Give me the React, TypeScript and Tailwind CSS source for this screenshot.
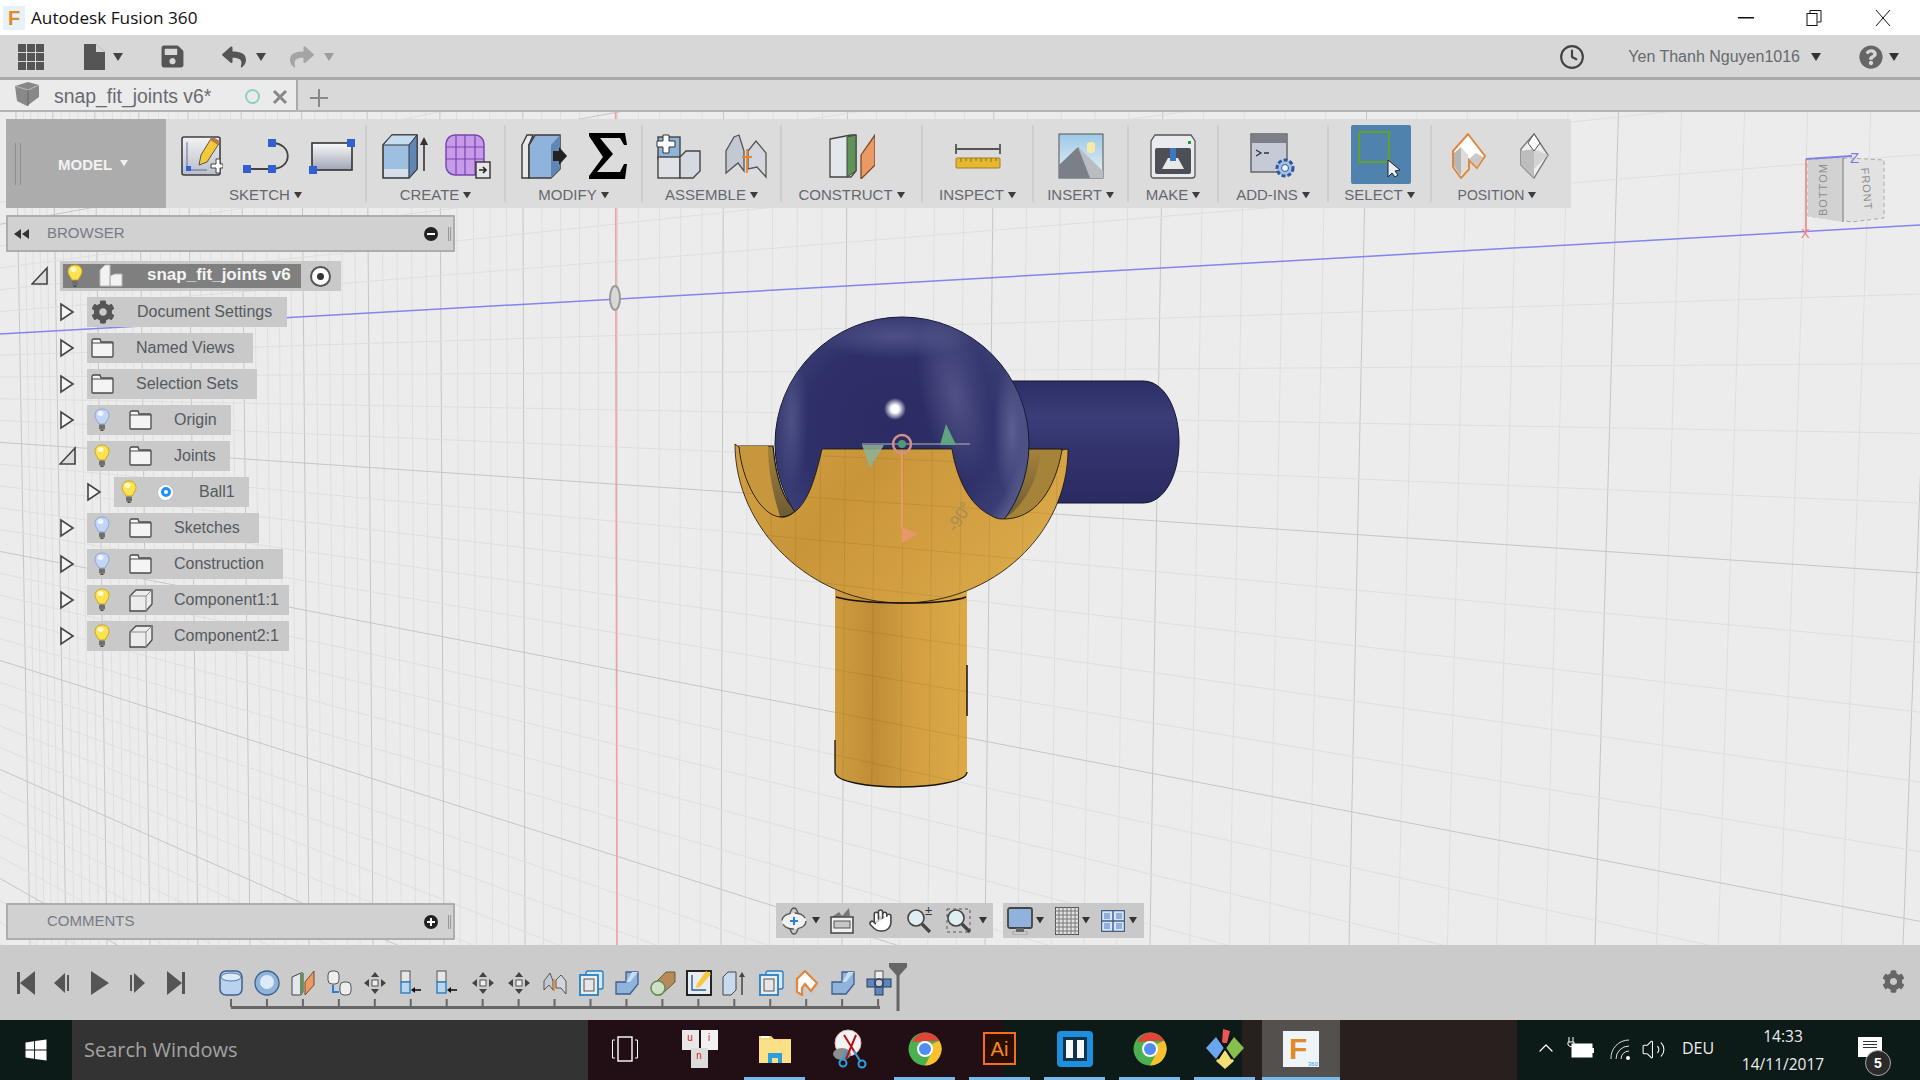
import React from "react";
import { FaCog, FaSave, FaReply, FaShare, FaQuestionCircle, FaWindows } from "react-icons/fa";
import { Clock, Hand, Volume2, ChevronUp } from "lucide-react";

const sans = "font-['Liberation_Sans',Arial,sans-serif]";

const Caret = ({ c = "#3d3d3d", s = 8 }: { c?: string; s?: number }) => (
  <svg width={s} height={s * 0.8} viewBox="0 0 10 8" className="shrink-0"><polygon points="0,0 10,0 5,8" fill={c} /></svg>
);

/* ---------- viewport grid ---------- */
const vMajors = [30, 66, 107, 150, 198, 250, 309, 373, 444, 525, 617, 721, 842, 985, 1150, 1349, 1595, 1903];
const vLines: { b: number; major: boolean }[] = [];
vMajors.forEach((b, i) => {
  vLines.push({ b, major: true });
  const n = vMajors[i + 1];
  if (n) for (let k = 1; k < 5; k++) vLines.push({ b: b + ((n - b) * k) / 5, major: false });
});
const hLines: { k: number; major: boolean }[] = [];
for (let k = -6; k <= 70; k++) hLines.push({ k, major: k % 5 === 0 });
const hy = (k: number, x: number) => 383 + ((268 + 50.5 * k - 383) * (x + 874)) / 2024;

const Grid = ({ minor, major, skipAxis = true }: { minor: string; major: string; skipAxis?: boolean }) => (
  <g strokeWidth={1}>
    {vLines.map((l, i) => (
      <line key={"v" + i} x1={l.b + (l.b - 617) * 0.024} y1={112} x2={l.b} y2={945} stroke={l.major ? major : minor} />
    ))}
    {hLines.filter((l) => !(skipAxis && l.k === 0)).map((l, i) => (
      <line key={"h" + i} x1={0} y1={hy(l.k, 0)} x2={1920} y2={hy(l.k, 1920)} stroke={l.major ? major : minor} />
    ))}
  </g>
);

const frontFace =
  "M822,449 H952 C957,480 970,505 990,515 C995,518 998,519 1002,519 C1035,520 1055,490 1062,450 L1068,449 C1068,534 993,603 902,603 C811,603 735,529 735,444 L739,447 C742,480 760,515 780,517 C785,518 790,516 797,510 C808,500 815,480 822,449 Z";

const Scene = () => (
  <svg className="absolute inset-0 w-full h-full" viewBox="0 112 1920 833" preserveAspectRatio="none">
    <defs>
      <linearGradient id="cylH" x1="0" y1="0" x2="0" y2="1">
        <stop offset="0" stopColor="#2d2e66" /><stop offset="0.3" stopColor="#3b3d78" /><stop offset="0.55" stopColor="#33346e" /><stop offset="1" stopColor="#2b2b62" />
      </linearGradient>
      <radialGradient id="ball" cx="0.47" cy="0.45" r="0.55">
        <stop offset="0" stopColor="#2b2c63" /><stop offset="0.65" stopColor="#2f306a" /><stop offset="0.9" stopColor="#3a3d74" /><stop offset="1" stopColor="#555a8a" />
      </radialGradient>
      <radialGradient id="glow">
        <stop offset="0" stopColor="#9498c2" stopOpacity="0.55" /><stop offset="1" stopColor="#9498c2" stopOpacity="0" />
      </radialGradient>
      <radialGradient id="spark">
        <stop offset="0" stopColor="#ffffff" /><stop offset="0.35" stopColor="#ffffff" /><stop offset="1" stopColor="#ffffff" stopOpacity="0" />
      </radialGradient>
      <linearGradient id="bowl" x1="0" y1="0" x2="1" y2="0.4">
        <stop offset="0" stopColor="#d2a044" /><stop offset="0.4" stopColor="#c9953a" /><stop offset="1" stopColor="#d9a848" />
      </linearGradient>
      <linearGradient id="stem" x1="0" y1="0" x2="1" y2="0">
        <stop offset="0" stopColor="#cf9d40" /><stop offset="0.3" stopColor="#c08d38" /><stop offset="0.6" stopColor="#d3a042" /><stop offset="1" stopColor="#dba946" />
      </linearGradient>
      <linearGradient id="wall" x1="0" y1="0" x2="0" y2="1">
        <stop offset="0" stopColor="#a5823c" /><stop offset="1" stopColor="#6d5a34" />
      </linearGradient>
      <clipPath id="ballClip"><circle cx="902" cy="444" r="127" /></clipPath>
      <clipPath id="orangeClip">
        <path d={frontFace} />
        <path d="M835,590 H967 V772 C967,782 930,787 900,787 C870,787 835,782 835,772 Z" />
      </clipPath>
    </defs>
    <rect x="0" y="112" width="1920" height="833" fill="#ececec" />
    <Grid minor="#dfdfdf" major="#c6c6c6" />
    {/* axes */}
    <line x1="0" y1="334" x2="1920" y2="225" stroke="#8484ee" strokeWidth="1.5" />
    <line x1="615.5" y1="112" x2="617" y2="945" stroke="#f4a0a0" strokeWidth="1.5" />
    <ellipse cx="615" cy="298" rx="5" ry="12" fill="#d8d8d8" stroke="#9a9a9a" strokeWidth="2" />
    {/* view cube */}
    <g>
      <path d="M1808,160 L1850,158 L1884,160 V218 L1852,222 L1808,216 Z" fill="#e2e2e2" stroke="#a9a9a9" strokeDasharray="4 3" />
      <path d="M1808,160 L1843,158 V222 L1808,216 Z" fill="#d2d2d2" />
      <line x1="1843" y1="158" x2="1843" y2="222" stroke="#777" />
      <line x1="1806" y1="159" x2="1806" y2="232" stroke="#f07c7c" strokeWidth="1.5" />
      <line x1="1806" y1="159" x2="1852" y2="156" stroke="#8080e6" strokeWidth="2" />
      <text x="1850" y="163" fontSize="15" fill="#7878e6" fontFamily="Liberation Sans">Z</text>
      <text x="1801" y="238" fontSize="13" fill="#f07c7c" fontFamily="Liberation Sans">X</text>
      <text transform="translate(1827,216) rotate(-90)" fontSize="11" fill="#8e8e8e" fontFamily="Liberation Sans" letterSpacing="1">BOTTOM</text>
      <text transform="translate(1861,168) rotate(85)" fontSize="11" fill="#8e8e8e" fontFamily="Liberation Sans" letterSpacing="1">FRONT</text>
    </g>
    {/* horizontal cylinder */}
    <path d="M1000,381 H1143 C1165,381 1179,410 1179,442 C1179,474 1165,503 1143,503 H1030 Z" fill="url(#cylH)" stroke="#15152e" strokeWidth="1" />
    {/* bowl back walls */}
    <path d="M739,446 H773 C776,480 785,505 797,510 C790,516 785,518 780,517 C760,515 742,480 739,446 Z" fill="url(#wall)" stroke="#1a1408" strokeWidth="1.2" />
    <path d="M1025,449 H1062 C1055,490 1035,520 1002,519 L990,515 C1010,505 1025,480 1025,449 Z" fill="url(#wall)" stroke="#1a1408" strokeWidth="1.2" />
    <path d="M739,446 H768 C768,480 778,508 780,517 C760,515 742,480 739,446 Z" fill="#c7973e" />
    <path d="M1062,450 H1040 C1040,480 1020,512 1002,519 C1035,520 1055,490 1062,450 Z" fill="#a58339" />
    {/* sphere */}
    <circle cx="902" cy="444" r="127" fill="url(#ball)" stroke="#15152e" strokeWidth="1" />
    <g clipPath="url(#ballClip)">
      <ellipse cx="955" cy="395" rx="34" ry="90" fill="url(#glow)" opacity="0.6" transform="rotate(-12 955 395)" />
      <ellipse cx="895" cy="337" rx="80" ry="22" fill="url(#glow)" opacity="0.55" />
      <ellipse cx="1012" cy="430" rx="18" ry="70" fill="url(#glow)" opacity="0.7" />
      <ellipse cx="792" cy="420" rx="16" ry="70" fill="url(#glow)" opacity="0.5" />
    </g>
    <circle cx="895" cy="409" r="11" fill="url(#spark)" />
    {/* stem */}
    <path d="M835,590 H967 V772 C967,782 930,787 900,787 C870,787 835,782 835,772 Z" fill="url(#stem)" />
    <path d="M835,740 V772 C835,782 870,787 900,787 C930,787 967,782 967,772" fill="none" stroke="#17120a" strokeWidth="1.3" />
    <line x1="967" y1="665" x2="967" y2="716" stroke="#17120a" strokeWidth="1.5" />
    {/* front of bowl */}
    <path d={frontFace} fill="url(#bowl)" stroke="#17120a" strokeWidth="0.8" />
    <path d="M836,597 C860,604 940,606 966,597" fill="none" stroke="#17120a" strokeWidth="1.4" />
    <g clipPath="url(#orangeClip)" opacity="0.07"><Grid minor="#000" major="#000" skipAxis={false} /></g>
    {/* triad */}
    <line x1="862" y1="444" x2="970" y2="444" stroke="#b5b5b5" strokeWidth="1.2" />
    <polygon points="862,445 884,445 870,468" fill="#8db49a" opacity="0.85" />
    <polygon points="940,445 956,445 946,424" fill="#5fa57f" />
    <line x1="902" y1="450" x2="902" y2="530" stroke="#ee9b72" strokeWidth="1.6" />
    <polygon points="902,527 902,543 918,534" fill="#e9966d" />
    <circle cx="902" cy="444" r="9" fill="none" stroke="#d58f8a" strokeWidth="2.5" />
    <circle cx="902" cy="444" r="4" fill="#4e9a78" />
    <text transform="translate(956,533) rotate(-58)" fontSize="17" fill="#a88c52" fontFamily="Liberation Sans">-90°</text>
  </svg>
);

/* ---------- tree icons ---------- */
const Bulb = ({ blue }: { blue?: boolean }) => (
  <svg width="16" height="24" viewBox="0 0 16 24" className="shrink-0">
    <path d="M8,1 C3.5,1 1,4 1,7.5 C1,11 4,13 4.8,16 H11.2 C12,13 15,11 15,7.5 C15,4 12.5,1 8,1 Z" fill={blue ? "#c3d5f7" : "#fae34e"} stroke={blue ? "#8da6d8" : "#cda520"} />
    <ellipse cx="6.5" cy="5.5" rx="3" ry="2.5" fill="#ffffff" opacity="0.75" />
    <rect x="5" y="16.5" width="6" height="5" rx="1" fill="#6f6f6f" />
    <rect x="6.5" y="21.5" width="3" height="1.5" fill="#4a4a4a" />
  </svg>
);
const Folder = () => (
  <svg width="23" height="20" viewBox="0 0 23 20" className="shrink-0">
    <path d="M1,3 C1,1.8 1.6,1 2.5,1 H9 L10,4 H21 C21.6,4 22,4.4 22,5 V18 C22,18.6 21.6,19 21,19 H2 C1.4,19 1,18.6 1,18 Z" fill="#f4f4f4" stroke="#4a4a4a" strokeWidth="1.3" />
    <line x1="1" y1="5" x2="22" y2="5" stroke="#4a4a4a" strokeWidth="1" />
  </svg>
);
const CompCube = () => (
  <svg width="24" height="24" viewBox="0 0 24 24" className="shrink-0">
    <path d="M1,8 L7,2 H23 V16 L17,23 H1 Z" fill="#ececec" stroke="#4a4a4a" strokeWidth="1.3" />
    <path d="M1,8 H17 V23 M17,8 L23,2" fill="none" stroke="#8a8a8a" strokeWidth="1" />
  </svg>
);
const Tri = ({ open }: { open?: boolean }) => (
  <svg width="17" height="20" viewBox="0 0 17 20" className="shrink-0">
    {open ? (
      <polygon points="1,18 16,18 16,2" fill="#dcdcdc" stroke="#444" strokeWidth="1.6" />
    ) : (
      <polygon points="2,2 2,18 14,10" fill="#f4f4f4" stroke="#444" strokeWidth="1.6" />
    )}
  </svg>
);

type RowT = { label: string; bulb?: "y" | "b"; kind: "gear" | "folder" | "cube" | "radio"; open?: boolean; depth?: number; pr: string };
const rows: RowT[] = [
  { label: "Document Settings", kind: "gear", pr: "pr-[15px]" },
  { label: "Named Views", kind: "folder", pr: "pr-[19px]" },
  { label: "Selection Sets", kind: "folder", pr: "pr-[19px]" },
  { label: "Origin", kind: "folder", bulb: "b", pr: "pr-[14px]" },
  { label: "Joints", kind: "folder", bulb: "y", open: true, pr: "pr-[14px]" },
  { label: "Ball1", kind: "radio", bulb: "y", depth: 1, pr: "pr-[14px]" },
  { label: "Sketches", kind: "folder", bulb: "b", pr: "pr-[19px]" },
  { label: "Construction", kind: "folder", bulb: "b", pr: "pr-[19px]" },
  { label: "Component1:1", kind: "cube", bulb: "y", pr: "pr-[10px]" },
  { label: "Component2:1", kind: "cube", bulb: "y", pr: "pr-[10px]" },
];

const Row = ({ r }: { r: RowT }) => (
  <div className={r.depth ? "flex items-center h-[30px] pl-[86px]" : "flex items-center h-[30px] pl-[59px]"}>
    <Tri open={r.open} />
    <div className={`ml-[11px] h-[30px] flex items-center bg-[#c9c9c9] ${r.pr}`}>
      {r.bulb ? (
        <div className="pl-[7px] pr-[19px]"><Bulb blue={r.bulb === "b"} /></div>
      ) : null}
      {r.kind === "gear" && <div className="pl-[4px] pr-[22px] text-[#555]"><FaCog size={24} /></div>}
      {r.kind === "folder" && (
        <div className={r.bulb ? "pr-[22px]" : "pl-[4px] pr-[22px]"}><Folder /></div>
      )}
      {r.kind === "cube" && <div className="pr-[21px]"><CompCube /></div>}
      {r.kind === "radio" && (
        <div className="pr-[25px] pl-[1px]">
          <div className="w-[17px] h-[17px] rounded-full bg-white border border-[#bbb] flex items-center justify-center">
            <div className="w-[10px] h-[10px] rounded-full border-[3px] border-[#1e90ff] bg-white" />
          </div>
        </div>
      )}
      <span className={`${sans} text-[16px] leading-none text-[#555a5f] whitespace-nowrap`}>{r.label}</span>
    </div>
  </div>
);

const Panel = ({ title, plus, back }: { title: string; plus?: boolean; back?: boolean }) => (
  <div className="w-[449px] h-[37px] ml-[6px] bg-[#d1d1d1] border-2 border-[#adadad] rounded-[1px] flex items-center">
    {back ? (
      <svg width="16" height="10" viewBox="0 0 16 10" className="ml-[6px] mr-[17px]">
        <polygon points="0,5 7,0 7,10" fill="#333" /><polygon points="8,5 15,0 15,10" fill="#333" />
      </svg>
    ) : (
      <div className="w-[39px]" />
    )}
    <span className={`${sans} text-[15px] text-[#777b85]`}>{title}</span>
    <div className="ml-auto w-[14px] h-[14px] rounded-full bg-[#222] flex items-center justify-center relative">
      <div className="w-[8px] h-[2px] bg-white" />
      {plus && <div className="absolute w-[2px] h-[8px] bg-white" />}
    </div>
    <div className="ml-[10px] mr-[2px] w-[3px] h-[14px] border-x border-[#999]" />
  </div>
);

/* ---------- toolbar icons ---------- */
const I = ({ w, h, children }: { w: number; h: number; children: React.ReactNode }) => (
  <svg width={w} height={h} viewBox={`0 0 ${w} ${h}`} className="shrink-0">{children}</svg>
);
const Blue = "#2f62d0";
const IcSketch = () => (
  <I w={42} h={44}>
    <defs><linearGradient id="sk" x1="0" y1="0" x2="0" y2="1"><stop offset="0" stopColor="#f3f3f3" /><stop offset="1" stopColor="#b9bdcb" /></linearGradient></defs>
    <rect x="1" y="3" width="38" height="38" rx="2" fill="url(#sk)" stroke="#3f3f3f" strokeWidth="1.6" />
    <path d="M6,8 V36 H26" fill="none" stroke="#5a6d9a" strokeWidth="1" />
    <rect x="5" y="32" width="5" height="5" fill={Blue} />
    <polygon points="31,3 39,8 26,28 18,31 20,21" fill="#f5c93a" stroke="#555" />
    <polygon points="31,3 39,8 37,11 29,6" fill="#b97a4a" />
    <path d="M30,30 h5 v-5 h4 v5 h3 v4 h-3 v5 h-4 v-5 h-5 z" fill="#fff" stroke="#444" />
  </I>
);
const IcLine = () => (
  <I w={46} h={36}>
    <path d="M4,31 H29 M29,5 C50,5 50,31 29,31" fill="none" stroke="#444" strokeWidth="1.8" />
    <rect x="0" y="27" width="8" height="8" fill={Blue} /><rect x="25" y="27" width="8" height="8" fill={Blue} /><rect x="25" y="1" width="8" height="8" fill={Blue} />
  </I>
);
const IcRect = () => (
  <I w={46} h={36}>
    <defs><linearGradient id="rc" x1="0" y1="0" x2="0" y2="1"><stop offset="0" stopColor="#fafafa" /><stop offset="1" stopColor="#9fa5b8" /></linearGradient></defs>
    <rect x="3" y="5" width="40" height="27" fill="url(#rc)" stroke="#333" strokeWidth="1.6" />
    <rect x="0" y="28" width="8" height="8" fill={Blue} /><rect x="38" y="1" width="8" height="8" fill={Blue} />
  </I>
);
const IcBox = () => (
  <I w={46} h={46}>
    <polygon points="1,12 10,2 35,2 35,36 27,45 1,45" fill="#9dbfe0" stroke="#3b3b3b" strokeWidth="1.6" />
    <polygon points="1,12 10,2 35,2 27,12" fill="#c6dcf0" stroke="#3b3b3b" strokeWidth="1" />
    <polygon points="27,12 35,2 35,36 27,45" fill="#5f86b5" stroke="#3b3b3b" strokeWidth="1" />
    <rect x="2" y="36" width="24" height="8" fill="#d5dee8" />
    <line x1="42" y1="9" x2="42" y2="38" stroke="#333" strokeWidth="1.6" /><polygon points="38,12 46,12 42,4" fill="#333" />
  </I>
);
const IcPurple = () => (
  <I w={46} h={46}>
    <rect x="1" y="2" width="38" height="40" rx="9" fill="#c79bea" stroke="#7a46ad" strokeWidth="1.5" />
    <path d="M1,14 H39 M1,26 H39 M11,2 V42 M20,2 V42 M30,2 V42" stroke="#7a46ad" strokeWidth="1.2" fill="none" />
    <rect x="31" y="29" width="14" height="16" fill="#e6e6e6" stroke="#333" strokeWidth="1.4" />
    <path d="M34,37 H40 M38,34 L41,37 L38,40" stroke="#222" strokeWidth="1.6" fill="none" />
  </I>
);
const IcModify = () => (
  <I w={46} h={46}>
    <polygon points="1,12 6,2 12,2 8,12 8,45 1,45" fill="#e8e8e8" stroke="#3b3b3b" strokeWidth="1.4" />
    <polygon points="8,12 14,2 39,2 39,36 30,45 8,45" fill="#8fb3da" stroke="#3b3b3b" strokeWidth="1.5" />
    <polygon points="30,12 39,2 39,36 30,45" fill="#5f86b5" />
    <rect x="32" y="18" width="6" height="10" fill="#222" /><polygon points="38,14 46,23 38,32" fill="#222" />
  </I>
);
const IcSigma = () => (
  <I w={38} h={46}>
    <polygon points="0,0 36,0 38,12 35,12 31,5 11,5 24,21 8,39 31,39 35,31 38,31 36,46 0,46 0,43 14,24 0,3" fill="#000" />
  </I>
);
const IcAssemble = () => (
  <I w={46} h={46}>
    <rect x="2" y="4" width="22" height="22" fill="#8fb3da" stroke="#444" strokeWidth="1.4" />
    <rect x="2" y="24" width="22" height="21" fill="#dfe3e8" stroke="#444" strokeWidth="1.4" />
    <polygon points="24,24 30,18 44,18 44,38 37,45 24,45" fill="#d5dae0" stroke="#444" strokeWidth="1.4" />
    <path d="M7,2 h6 v6 h6 v6 h-6 v6 h-6 v-6 h-6 v-6 h6 z" fill="#fff" stroke="#333" />
  </I>
);
const IcJoint = () => (
  <I w={44} h={46}>
    <path d="M2,40 V18 L10,4 L15,2 L20,18 V38 L14,30 Z" fill="#c3c9d2" stroke="#555" strokeWidth="1.3" />
    <path d="M24,36 V18 L32,8 L42,20 V44 L33,34 Z" fill="#d3d7dd" stroke="#555" strokeWidth="1.3" />
    <path d="M23,16 V40 M18,24 H28" stroke="#e8852c" strokeWidth="1.8" fill="none" />
  </I>
);
const IcConstruct = () => (
  <I w={46} h={46}>
    <polygon points="1,6 22,2 27,2 27,38 22,44 1,44" fill="#e3e6ea" stroke="#444" strokeWidth="1.3" />
    <polygon points="18,4 27,2 27,38 18,44" fill="#5f9456" stroke="#444" />
    <polygon points="32,22 46,2 46,32 32,46" fill="#ec9a63" stroke="#7a4a2a" strokeWidth="1.3" />
  </I>
);
const IcInspect = () => (
  <I w={46} h={26}>
    <path d="M1,1 V11 M45,1 V11 M1,6 H45" stroke="#555" strokeWidth="1.8" fill="none" />
    <rect x="1" y="15" width="44" height="10" rx="1" fill="#e6b732" stroke="#a0801c" />
    <path d="M6,15v4M11,15v3M16,15v4M21,15v3M26,15v4M31,15v3M36,15v4M41,15v3" stroke="#8a6e18" strokeWidth="1" />
  </I>
);
const IcInsert = () => (
  <I w={46} h={46}>
    <defs><linearGradient id="sky" x1="0" y1="0" x2="0" y2="1"><stop offset="0" stopColor="#9dc9e6" /><stop offset="1" stopColor="#eaf2f6" /></linearGradient></defs>
    <rect x="1" y="1" width="44" height="44" fill="url(#sky)" stroke="#555" />
    <polygon points="1,45 1,32 20,14 45,45" fill="#7b7f88" />
    <polygon points="20,14 45,38 45,45 32,45" fill="#b9bcc2" />
    <rect x="29" y="9" width="8" height="11" rx="3" fill="#f7e9a8" />
  </I>
);
const IcMake = () => (
  <I w={46} h={46}>
    <path d="M5,2 H41 L45,8 V42 C45,44 44,45 42,45 H4 C2,45 1,44 1,42 V8 Z" fill="#e9ebee" stroke="#555" strokeWidth="1.3" />
    <rect x="5" y="15" width="36" height="26" rx="2" fill="#4c4f55" />
    <polygon points="12,36 18,25 28,25 34,36" fill="#e8e8e8" />
    <rect x="20" y="15" width="6" height="13" fill="#3a78c2" />
    <rect x="38" y="8" width="3" height="3" fill="#21a034" />
  </I>
);
const IcAddins = () => (
  <I w={46} h={46}>
    <rect x="1" y="1" width="36" height="38" fill="#c6cad6" stroke="#555" strokeWidth="1.3" />
    <rect x="2" y="2" width="34" height="8" fill="#7c7f87" />
    <path d="M6,17 L11,20 L6,23 M14,20 H19" stroke="#333" strokeWidth="1.3" fill="none" />
    <circle cx="35" cy="35" r="8" fill="#a7bfe4" stroke="#2c5a9c" strokeWidth="3" strokeDasharray="4 2" />
    <circle cx="35" cy="35" r="3.5" fill="#eef3fa" stroke="#2c5a9c" />
  </I>
);
const IcSelect = () => (
  <I w={46} h={46}>
    <rect x="1" y="1" width="30" height="30" fill="none" stroke="#5ea12c" strokeWidth="2" />
    <polygon points="30,29 30,46 34,42 37,46 40,44 37,40 42,39" fill="#e8eef6" stroke="#222" />
  </I>
);
const IcPos1 = () => (
  <I w={34} h={46}>
    <polygon points="16,1 33,23 25,35 17,27 17,36 9,45 1,34 1,18" fill="#fff" stroke="#e0873d" strokeWidth="2" />
    <polygon points="2,20 9,14 9,43 2,33" fill="#b5b5b5" />
    <polygon points="9,14 16,22 16,35 9,43" fill="#dcdcdc" />
    <polygon points="17,26 25,34 31,24 24,20" fill="#c9c9c9" />
  </I>
);
const IcPos2 = () => (
  <I w={30} h={46}>
    <polygon points="15,1 29,22 15,45 2,32 2,16" fill="#efefef" stroke="#777" strokeWidth="1.4" />
    <polygon points="15,16 29,22 15,36" fill="#d3d3d3" /><polygon points="2,18 15,16 15,45 2,32" fill="#bdbdbd" />
    <polygon points="15,1 21,10 15,18 9,10" fill="#fff" stroke="#555" />
  </I>
);

const Group = ({ w, label, gap, children }: { w: string; label: string; gap: string; children: React.ReactNode }) => (
  <div className={`${w} flex flex-col items-center`}>
    <div className={`h-[50px] mt-[12px] flex items-center justify-center ${gap}`}>{children}</div>
    <div className={`mt-[5px] h-[18px] flex items-center gap-[4px] ${sans} text-[15px] text-[#65686f]`}>
      <span>{label}</span><Caret />
    </div>
  </div>
);
const Sep = () => <div className="self-center w-[2px] h-[77px] bg-[#cdcdcd]" />;

const Toolbar = () => (
  <div className="ml-[6px] mt-[7px] w-[1565px] h-[89px] flex bg-[#dcdcdc]">
    <div className="w-[160px] bg-[#acacac] flex items-center">
      <div className="ml-[9px] w-[6px] h-[42px] border-x border-[#8f8f8f]" />
      <span className={`ml-[37px] mt-[3px] ${sans} text-[15px] font-bold text-[#f2f2f2]`}>MODEL</span>
      <div className="ml-[8px]"><Caret c="#f0f0f0" /></div>
    </div>
    <Group w="w-[199px]" label="SKETCH" gap="gap-[20px] pl-[5px]"><IcSketch /><IcLine /><IcRect /></Group><Sep />
    <Group w="w-[137px]" label="CREATE" gap="gap-[17px] pl-[2px]"><IcBox /><IcPurple /></Group><Sep />
    <Group w="w-[135px]" label="MODIFY" gap="gap-[22px]"><IcModify /><IcSigma /></Group><Sep />
    <Group w="w-[137px]" label="ASSEMBLE" gap="gap-[22px]"><IcAssemble /><IcJoint /></Group><Sep />
    <Group w="w-[139px]" label="CONSTRUCT" gap="gap-0"><IcConstruct /></Group><Sep />
    <Group w="w-[109px]" label="INSPECT" gap="gap-0"><IcInspect /></Group><Sep />
    <Group w="w-[93px]" label="INSERT" gap="gap-0"><IcInsert /></Group><Sep />
    <Group w="w-[88px]" label="MAKE" gap="gap-0"><IcMake /></Group><Sep />
    <Group w="w-[108px]" label="ADD-INS" gap="gap-0"><IcAddins /></Group><Sep />
    <div className="w-[101px] flex flex-col items-center">
      <div className="mt-[6px] ml-[3px] w-[60px] h-[59px] bg-[#4f82ad] rounded-[2px] flex items-start pl-[7px] pt-[6px]"><IcSelect /></div>
      <div className={`mt-[2px] h-[18px] flex items-center gap-[4px] ${sans} text-[15px] text-[#65686f]`}><span>SELECT</span><Caret /></div>
    </div><Sep />
    <div className="w-[137px] flex flex-col items-center">
      <div className="h-[50px] mt-[12px] flex items-center justify-center gap-[33px]"><IcPos1 /><IcPos2 /></div>
      <div className={`mt-[5px] -ml-[7px] h-[18px] flex items-center gap-[4px] ${sans} text-[14px] text-[#65686f]`}><span>POSITION</span><Caret /></div>
    </div>
  </div>
);

/* ---------- nav bar icons ---------- */
const NavOrbit = () => (
  <I w={26} h={30}>
    <ellipse cx="13" cy="15" rx="5" ry="13" fill="none" stroke="#555" strokeWidth="1.3" />
    <ellipse cx="13" cy="15" rx="12" ry="8" fill="#f0f0f0" stroke="#555" strokeWidth="1.3" strokeDasharray="12 4" />
    <path d="M13,11 v8 M9,15 h8" stroke="#2a7fd8" strokeWidth="2" />
  </I>
);
const NavLook = () => (
  <I w={26} h={28}>
    <polygon points="3,10 10,5 13,9 20,1 21,9" fill="#777" />
    <rect x="2" y="10" width="22" height="16" fill="#f0f0f0" stroke="#444" strokeWidth="1.5" />
    <rect x="5" y="14" width="16" height="7" fill="#c6c6c6" stroke="#555" />
  </I>
);
const Magnifier = ({ dash }: { dash?: boolean }) => (
  <I w={26} h={26}>
    {dash && <rect x="1" y="1" width="23" height="23" fill="none" stroke="#555" strokeDasharray="3 3" />}
    <circle cx="10" cy="10" r="8" fill="#dfeef0" stroke="#444" strokeWidth="1.6" />
    <line x1="16" y1="16" x2="24" y2="24" stroke="#444" strokeWidth="3.2" />
  </I>
);
const NavDisplay = () => (
  <I w={26} h={28}>
    <rect x="1" y="1" width="24" height="20" rx="2" fill="#8fb3dc" stroke="#444" strokeWidth="1.8" />
    <rect x="9" y="21" width="8" height="4" fill="#666" /><rect x="6" y="25" width="14" height="2" fill="#eee" stroke="#666" strokeWidth="0.5" />
  </I>
);
const NavGrid = () => (
  <I w={24} h={28}>
    <rect x="0.5" y="0.5" width="23" height="27" fill="#e2e2e2" stroke="#555" />
    <path d="M4,0v28M8,0v28M12,0v28M16,0v28M20,0v28M0,4h24M0,8h24M0,12h24M0,16h24M0,20h24M0,24h24" stroke="#777" strokeWidth="1" />
  </I>
);
const NavViews = () => (
  <I w={24} h={22}>
    <rect x="0.5" y="0.5" width="23" height="21" rx="1" fill="#d9e4f2" stroke="#3f5d8e" strokeWidth="1.4" />
    <path d="M12,0v22M0,11h24" stroke="#3f5d8e" strokeWidth="1.4" />
    <rect x="3" y="3" width="6" height="6" fill="#8fb0dc" /><rect x="15" y="3" width="6" height="6" fill="#8fb0dc" /><rect x="3" y="13" width="6" height="6" fill="#8fb0dc" /><rect x="15" y="13" width="6" height="6" fill="#8fb0dc" />
  </I>
);

const NavBar = () => (
  <div className="absolute left-[776px] bottom-[7px] flex gap-[10px]">
    <div className="w-[217px] h-[35px] bg-[#c9c9c9] flex items-center pl-[5px]">
      <NavOrbit /><div className="ml-[5px]"><Caret c="#333" /></div>
      <div className="ml-[9px]"><NavLook /></div>
      <div className="ml-[13px] text-[#444]"><Hand size={25} strokeWidth={1.5} fill="#fff" /></div>
      <div className="ml-[13px] flex items-start">
        <Magnifier />
        <span className={`${sans} -ml-[7px] -mt-[4px] text-[13px] leading-none text-[#333]`}>±</span>
      </div>
      <div className="ml-[14px]"><Magnifier dash /></div>
      <div className="ml-[7px]"><Caret c="#333" /></div>
    </div>
    <div className="w-[141px] h-[35px] bg-[#c9c9c9] flex items-center pl-[4px]">
      <NavDisplay /><div className="ml-[3px]"><Caret c="#333" /></div>
      <div className="ml-[11px]"><NavGrid /></div><div className="ml-[3px]"><Caret c="#333" /></div>
      <div className="ml-[11px]"><NavViews /></div><div className="ml-[4px]"><Caret c="#333" /></div>
    </div>
  </div>
);

/* ---------- timeline icons (26 tall) ---------- */
const T = ({ children }: { children: React.ReactNode }) => (
  <svg width="26" height="26" viewBox="0 0 26 26">{children}</svg>
);
const tMove = <T><path d="M13,2 L17,7 H9 Z M13,24 L17,19 H9 Z M2,13 L7,9 V17 Z M24,13 L19,9 V17 Z" fill="#444" /><rect x="10" y="10" width="6" height="6" fill="#eee" stroke="#555" /></T>;
const tAlign = <T><rect x="3" y="1" width="9" height="11" fill="#e6e6e6" stroke="#555" /><rect x="3" y="12" width="9" height="11" fill="#b8d4ee" stroke="#2a7fc4" strokeWidth="1.4" /><path d="M14,20 h9" stroke="#111" strokeWidth="1.6" /><polygon points="13,20 17,17 17,23" fill="#111" /></T>;
const tCopy = <T><rect x="8" y="1" width="17" height="18" rx="2" fill="#d8e8f6" stroke="#2a7fc4" strokeWidth="1.4" /><rect x="2" y="5" width="18" height="20" fill="#e9eef2" stroke="#2a7fc4" strokeWidth="1.8" /><rect x="6" y="9" width="10" height="12" fill="#e6e6e6" stroke="#555" /></T>;
const tSolid = <T><polygon points="2,12 12,12 12,2 18,2 24,2 24,14 16,24 2,24" fill="#8fb3da" stroke="#3e5f8e" strokeWidth="1.3" /><polygon points="12,12 18,2 24,2 16,12" fill="#c6dcf0" /></T>;
const tItems: React.ReactNode[] = [
  <T><rect x="2" y="1" width="22" height="24" rx="6" fill="#b9d3ee" stroke="#3e5f8e" strokeWidth="1.5" /><ellipse cx="13" cy="7" rx="10" ry="4" fill="#dcebf8" stroke="#3e5f8e" strokeWidth="0.8" /></T>,
  <T><circle cx="13" cy="13" r="12" fill="#8fb3da" stroke="#3e5f8e" strokeWidth="1.3" /><circle cx="13" cy="12" r="7" fill="#dcebf8" /></T>,
  <T><polygon points="2,7 11,3 13,3 13,22 11,25 2,25" fill="#e3e6ea" stroke="#444" /><polygon points="10,4 13,3 13,22 10,25" fill="#5f9456" /><polygon points="15,12 24,1 24,15 15,25" fill="#ec9a63" stroke="#7a4a2a" /></T>,
  <T><rect x="2" y="1" width="11" height="13" rx="4" fill="#eee" stroke="#555" /><rect x="14" y="12" width="11" height="13" rx="4" fill="#eee" stroke="#555" /><path d="M7,15 V22 H13" fill="none" stroke="#2a7fd8" strokeWidth="2" /></T>,
  tMove, tAlign, tAlign, tMove, tMove,
  <T><path d="M2,20 V11 L8,3 L11,11 V20 L7,15 Z" fill="#c3c9d2" stroke="#555" /><path d="M14,18 V10 L19,5 L24,11 V24 L19,18 Z" fill="#d3d7dd" stroke="#555" /><path d="M12,9 V21" stroke="#e8852c" strokeWidth="1.6" /></T>,
  tCopy, tSolid,
  <T><polygon points="1,17 16,2 25,2 25,12 11,25 5,25" fill="#b78a57" stroke="#6d5a34" /><circle cx="8" cy="18" r="7" fill="#cfe0c6" stroke="#5f9456" strokeWidth="1.6" /></T>,
  <T><rect x="1" y="1" width="24" height="24" fill="#e9edf3" stroke="#111" strokeWidth="1.8" /><path d="M6,5 V20 H20" fill="none" stroke="#2a5d9c" strokeWidth="1.4" /><polygon points="20,1 25,4 14,17 10,18 11,14" fill="#f5c93a" /></T>,
  <T><polygon points="1,7 6,2 14,2 14,20 9,25 1,25" fill="#c8dbee" stroke="#444" /><line x1="20" y1="6" x2="20" y2="25" stroke="#444" strokeWidth="1.5" /><polygon points="17,7 23,7 20,2" fill="#444" /></T>,
  tCopy,
  <T><polygon points="11,1 23,13 17,21 11,14 8,18 8,25 3,22 3,9" fill="#fff" stroke="#e0873d" strokeWidth="2.2" /></T>,
  tSolid,
  <T><rect x="9" y="1" width="8" height="8" fill="#eee" stroke="#555" /><rect x="1" y="9" width="8" height="8" fill="#5f86b5" stroke="#233f68" /><rect x="17" y="9" width="8" height="8" fill="#5f86b5" stroke="#233f68" /><rect x="9" y="17" width="8" height="8" fill="#5f86b5" stroke="#233f68" /><circle cx="13" cy="13" r="4" fill="none" stroke="#233f68" strokeWidth="1.5" /></T>,
];

const Play = ({ d, w = 20 }: { d: string; w?: number }) => (
  <svg width={w} height="24" viewBox={`0 0 ${w} 24`} className="shrink-0"><path d={d} fill="#555" /></svg>
);

const Timeline = () => (
  <div className="h-[75px] bg-[#cbcbcb] flex items-start pl-[17px] relative">
    <div className="flex items-center mt-[26px]">
      <Play w={18} d="M0,1 H3 V23 H0 Z M18,0 V24 L3,12 Z" />
      <div className="ml-[19px]"><Play d="M0,12 L11,2 V22 Z M13,4 H15 V20 H13 Z" /></div>
      <div className="ml-[16px]"><Play d="M1,0 L19,12 L1,24 Z" /></div>
      <div className="ml-[15px]"><Play d="M5,4 H7 V20 H5 Z M9,2 L20,12 L9,22 Z" /></div>
      <div className="ml-[22px]"><Play w={18} d="M0,0 L15,12 L0,24 Z M15,1 H18 V23 H15 Z" /></div>
    </div>
    <div className="ml-[28px] mt-[25px] flex flex-col">
      <div className="flex">
        {tItems.map((n, i) => (
          <div key={i} className="w-[36px] h-[26px] flex justify-center">{n}</div>
        ))}
      </div>
      <svg width="684" height="12" viewBox="0 0 684 12" className="mt-[1px]">
        <rect x="18" y="9" width="649" height="3" fill="#666" />
        {tItems.map((_, i) => (<rect key={i} x={17 + i * 35.95} y="2" width="2" height="8" fill="#666" />))}
      </svg>
    </div>
    <svg width="18" height="50" viewBox="0 0 18 50" className="-ml-[8px] mt-[18px]">
      <polygon points="0,0 18,0 18,4 9,14 0,4" fill="#666" /><rect x="7.5" y="10" width="3" height="38" fill="#666" />
    </svg>
    <div className="absolute right-[15px] top-[25px] text-[#666]"><FaCog size={23} /></div>
  </div>
);

/* ---------- taskbar ---------- */
const Chrome = () => (
  <svg width="34" height="34" viewBox="0 0 34 34">
    <circle cx="17" cy="17" r="16.5" fill="#4caf50" />
    <path d="M17,.5 A16.5,16.5 0 0 1 31.3,8.7 L17,9 L4,10 A16.5,16.5 0 0 1 17,.5 Z" fill="#e0453a" />
    <path d="M31.3,8.7 A16.5,16.5 0 0 1 17,33.5 L24,20 L24,12 Z" fill="#fbc02d" />
    <circle cx="17" cy="17" r="8" fill="#fff" /><circle cx="17" cy="17" r="6" fill="#4f8ef0" />
  </svg>
);
const TB = ({ w, line, active, children }: { w: string; line?: boolean; active?: boolean; children: React.ReactNode }) => (
  <div className={`${w} h-[60px] relative flex items-center justify-center pb-[3px] ${active ? "bg-[#54504e]" : ""}`}>
    {children}
    {line && <div className={active ? "absolute bottom-0 inset-x-0 h-[3px] bg-[#76b9ed]" : "absolute bottom-0 left-[7px] right-[7px] h-[3px] bg-[#76b9ed]"} />}
  </div>
);

const Taskbar = () => (
  <div className="h-[60px] flex bg-[#0c1a18] text-white">
    <div className="w-[72px] flex items-center justify-center"><FaWindows size={24} /></div>
    <div className="w-[516px] bg-[#333333] flex items-center pl-[12px]">
      <span className="font-['Open_Sans',sans-serif] text-[20px] text-[#a3a3a3]">Search Windows</span>
    </div>
    <div className="w-[929px] flex bg-[linear-gradient(90deg,#220f16_0,#220f16_415px,#0c1a18_415px,#0c1a18_654px,#27201f_654px,#27201f_929px)]">
      <TB w="w-[74px]">
        <svg width="26" height="28" viewBox="0 0 26 28"><rect x="6" y="2" width="14" height="24" fill="none" stroke="#fff" strokeWidth="1.4" /><path d="M3,5 H0.5 V23 H3 M23,5 H25.5 V23 H23" fill="none" stroke="#fff" /></svg>
      </TB>
      <TB w="w-[75px]">
        <div className="relative w-[36px] h-[38px]">
          <div className={`absolute left-0 top-0 w-[17px] h-[20px] bg-[#e8e8e8] text-[#d22] text-[10px] text-center ${sans}`}>u</div>
          <div className={`absolute right-0 top-0 w-[17px] h-[20px] bg-[#f2f2f2] text-[#d22] text-[10px] text-center ${sans}`}>i</div>
          <div className={`absolute left-[9px] bottom-0 w-[17px] h-[20px] bg-[#dcdcdc] text-[#d22] text-[10px] text-center ${sans}`}>n</div>
        </div>
      </TB>
      <TB w="w-[75px]" line>
        <svg width="34" height="30" viewBox="0 0 34 30"><path d="M1,2 H13 L16,5 H33 V29 H1 Z" fill="#f8d775" /><rect x="1" y="6" width="32" height="23" fill="#fbe08a" /><rect x="3" y="2" width="8" height="2" fill="#fff" /><path d="M10,29 V19 H24 V29 H20 V24 H14 V29 Z" fill="#2b9fe0" /></svg>
      </TB>
      <TB w="w-[75px]">
        <svg width="36" height="40" viewBox="0 0 36 40"><circle cx="16" cy="14" r="13" fill="#f4f4f4" stroke="#e2b3b3" /><ellipse cx="10" cy="25" rx="9" ry="6" fill="#8d8d8d" /><path d="M12,6 L27,30 M24,6 L14,30" stroke="#b11" strokeWidth="2" /><circle cx="11" cy="34" r="3.5" fill="none" stroke="#2b9fe0" strokeWidth="2" /><circle cx="30" cy="35" r="3.5" fill="none" stroke="#2b9fe0" strokeWidth="2" /><path d="M14,22 L11,31 M22,22 L28,32" stroke="#2b9fe0" strokeWidth="2" /></svg>
      </TB>
      <TB w="w-[75px]" line><Chrome /></TB>
      <TB w="w-[75px]" line>
        <div className={`w-[33px] h-[33px] border-2 border-[#f26f1c] bg-[#2b0e02] flex items-center justify-center ${sans} text-[20px] leading-none text-[#f58a26]`}>Ai</div>
      </TB>
      <TB w="w-[75px]" line>
        <div className="w-[36px] h-[36px] rounded-[4px] bg-[#1d8fdc] flex items-center justify-center">
          <div className="w-[24px] h-[24px] border-[3px] border-[#11324d] bg-[#f8f8f8] flex items-center justify-center"><div className="w-[4px] h-[18px] bg-[#11324d]" /></div>
        </div>
      </TB>
      <TB w="w-[75px]" line><Chrome /></TB>
      <TB w="w-[75px]" line>
        <svg width="38" height="40" viewBox="0 0 38 40"><polygon points="0,19 10,8 18,19 10,30" fill="#6aa6ef" /><polygon points="28,8 38,19 28,30 20,19" fill="#86bf4d" /><polygon points="19,21 28,32 19,40 10,32" fill="#f4df75" /><polygon points="17,0 24,2 21,14 16,14" fill="#e55" /><path d="M12,8 L26,30 M26,8 L12,30" stroke="#111" strokeWidth="2" /></svg>
      </TB>
      <TB w="w-[78px]" line active>
        <div className="w-[36px] h-[36px] bg-[#eef4f8] relative flex items-center pl-[6px]">
          <span className={`${sans} font-bold text-[30px] leading-none text-[#e08a28]`}>F</span>
          <span className={`absolute right-[1px] bottom-0 ${sans} text-[6px] leading-none text-[#2b9fe0]`}>360</span>
        </div>
      </TB>
      <div className="flex-1" />
    </div>
    <div className="flex-1 flex items-center relative">
      <div className="absolute left-[17px] top-[16px]"><ChevronUp size={24} strokeWidth={1.2} /></div>
      <svg width="28" height="24" viewBox="0 0 28 24" className="absolute left-[50px] top-[16px]"><rect x="5" y="8" width="20" height="13" fill="#fff" stroke="#fff" /><rect x="25" y="12" width="2" height="5" fill="#fff" /><path d="M2,6 V1 M6,6 V1 M1,6 H7 V9 L4,11 L1,9 Z" stroke="#fff" fill="none" /></svg>
      <svg width="22" height="24" viewBox="0 0 22 24" className="absolute left-[92px] top-[17px]"><path d="M2,22 A18,18 0 0 1 20,3 M7,22 A13,13 0 0 1 20,9 M12,22 A8,8 0 0 1 20,14" fill="none" stroke="#ddd" strokeWidth="1" /><circle cx="19" cy="21" r="2" fill="#fff" /></svg>
      <div className="absolute left-[124px] top-[17px]"><Volume2 size={25} strokeWidth={1} /></div>
      <span className="absolute left-[165px] top-[17px] font-['Open_Sans',sans-serif] text-[16px] leading-[22px] text-[#eee]">DEU</span>
      <div className="absolute left-[223px] top-0 w-[86px] h-[60px] flex flex-col items-center font-['Open_Sans',sans-serif] text-[15.5px] leading-[22px] text-[#eee]">
        <span className="mt-[5px]">14:33</span><span className="mt-[6px]">14/11/2017</span>
      </div>
      <div className="absolute left-[341px] top-[17px] w-[24px] h-[20px] bg-white flex flex-col gap-[2px] pt-[4px] pl-[5px]">
        <div className="w-[14px] h-[1px] bg-[#333]" /><div className="w-[14px] h-[1px] bg-[#333]" /><div className="w-[14px] h-[1px] bg-[#333]" />
      </div>
      <div className={`absolute left-[348px] top-[30px] w-[26px] h-[26px] rounded-full bg-[#2a2a2a] border border-[#aaa] flex items-center justify-center ${sans} font-bold text-[14px]`}>5</div>
    </div>
  </div>
);

/* ---------- app ---------- */
export default function App() {
  return (
    <div className={`w-[1920px] h-[1080px] flex flex-col overflow-hidden bg-white ${sans}`}>
      {/* title bar */}
      <div className="h-[35px] bg-white flex items-center relative">
        <div className="ml-[3px] w-[22px] h-[24px] bg-[#e6f1f8] flex items-center justify-center">
          <span className={`${sans} font-bold text-[20px] leading-none text-[#e08a28]`}>F</span>
        </div>
        <span className="ml-[6px] font-['Open_Sans',sans-serif] text-[17.2px] text-[#111]">Autodesk Fusion 360</span>
        <svg width="16" height="2" viewBox="0 0 16 2" className="ml-auto mr-[52px]"><rect width="16" height="1.5" fill="#111" /></svg>
        <svg width="16" height="16" viewBox="0 0 16 16" className="mr-[53px]"><rect x="1" y="3.5" width="10" height="12" fill="#fff" stroke="#111" /><path d="M4,3 V0.5 H15 V12 H11.5" fill="none" stroke="#111" /></svg>
        <svg width="16" height="16" viewBox="0 0 16 16" className="mr-[29px]"><path d="M1,0 L15,16 M15,0 L1,16" stroke="#111" strokeWidth="1" /></svg>
      </div>

      {/* quick access bar */}
      <div className="h-[42px] pt-[1px] bg-[#d7d7d7] flex items-center text-[#555]">
        <svg width="26" height="26" viewBox="0 0 26 26" className="ml-[18px]">
          {[0, 9, 18].map((y) => [0, 9, 18].map((x) => <rect key={x + "-" + y} x={x} y={y} width="8" height="8" fill="#555" />))}
        </svg>
        <svg width="22" height="26" viewBox="0 0 22 26" className="ml-[40px]"><path d="M0,0 H12 L21,8 V26 H0 Z" fill="#555" /><path d="M12,0 V8 H21" fill="#d7d7d7" /></svg>
        <div className="ml-[7px]"><Caret c="#444" s={10} /></div>
        <div className="ml-[37px]"><FaSave size={25} /></div>
        <div className="ml-[37px]"><FaReply size={24} /></div>
        <div className="ml-[10px]"><Caret c="#444" s={10} /></div>
        <div className="ml-[24px] text-[#a4a4a4]"><FaShare size={24} /></div>
        <div className="ml-[10px]"><Caret c="#9c9c9c" s={10} /></div>
        <div className="ml-auto text-[#444]"><Clock size={26} strokeWidth={2} /></div>
        <span className={`ml-[43px] ${sans} text-[16px] text-[#666a6e]`}>Yen Thanh Nguyen1016</span>
        <div className="ml-[11px]"><Caret c="#333" s={10} /></div>
        <div className="ml-[38px] text-[#666]"><FaQuestionCircle size={24} /></div>
        <div className="ml-[6px] mr-[21px]"><Caret c="#333" s={10} /></div>
      </div>
      <div className="h-[3px] bg-[#a9a9a9]" />

      {/* document tabs */}
      <div className="h-[32px] bg-[#d9d9d9] border-b-2 border-[#b3b3b3] flex">
        <div className="w-[298px] bg-[#ebebeb] border-r-2 border-[#a9a9a9] flex items-center pt-[3px]">
          <svg width="26" height="26" viewBox="0 0 26 26" className="ml-[14px] -mt-[5px]"><path d="M1,5 L14,1 L25,4 V16 L13,25 L3,20 Z" fill="#888" /><path d="M1,5 L14,9 L25,4" fill="none" stroke="#bbb" /><path d="M14,9 V25" stroke="#666" /></svg>
          <span className={`ml-[14px] w-[158px] ${sans} text-[19.4px] leading-none text-[#6a6a70] whitespace-nowrap`}>snap_fit_joints v6*</span>
          <div className="ml-[33px] w-[15px] h-[15px] rounded-full border-2 border-[#8ed1c4]" />
          <svg width="16" height="16" viewBox="0 0 16 16" className="ml-[12px]"><path d="M2,2 L14,14 M14,2 L2,14" stroke="#888" strokeWidth="3" /></svg>
        </div>
        <svg width="18" height="18" viewBox="0 0 18 18" className="ml-[12px] mt-[9px]"><path d="M9,0 V18 M0,9 H18" stroke="#888" strokeWidth="2" /></svg>
      </div>

      {/* viewport */}
      <div className="flex-1 relative">
        <Scene />
        <div className="relative h-full flex flex-col pb-[5px]">
          <Toolbar />
          <div className="mt-[7px]"><Panel title="BROWSER" back /></div>
          <div className="mt-[9px] flex flex-col gap-[6px]">
            <div className="flex items-center h-[30px] pl-[31px]">
              <Tri open />
              <div className="ml-[12px] w-[281px] h-[30px] bg-[#c9c9c9] flex items-center">
                <div className="ml-[3px] w-[238px] h-[24px] bg-[#7f7f7f] flex items-center pl-[4px]">
                  <Bulb />
                  <svg width="24" height="24" viewBox="0 0 24 24" className="ml-[16px]"><path d="M1,22 V6 L6,1 H11 V12 L16,10 H23 V22 Z" fill="#f2f2f2" stroke="#bbb" /><path d="M11,12 V22" stroke="#999" /></svg>
                  <span className={`ml-[24px] -mt-[2px] ${sans} text-[17px] font-bold text-[#f4f4f4] whitespace-nowrap`}>snap_fit_joints v6</span>
                </div>
                <div className="ml-[9px] w-[21px] h-[21px] rounded-full bg-white border-2 border-[#555] flex items-center justify-center"><div className="w-[7px] h-[7px] rounded-full bg-[#333]" /></div>
              </div>
            </div>
            {rows.map((r) => <Row key={r.label} r={r} />)}
          </div>
          <div className="mt-auto"><Panel title="COMMENTS" plus /></div>
        </div>
        <NavBar />
      </div>

      <Timeline />
      <Taskbar />
    </div>
  );
}
